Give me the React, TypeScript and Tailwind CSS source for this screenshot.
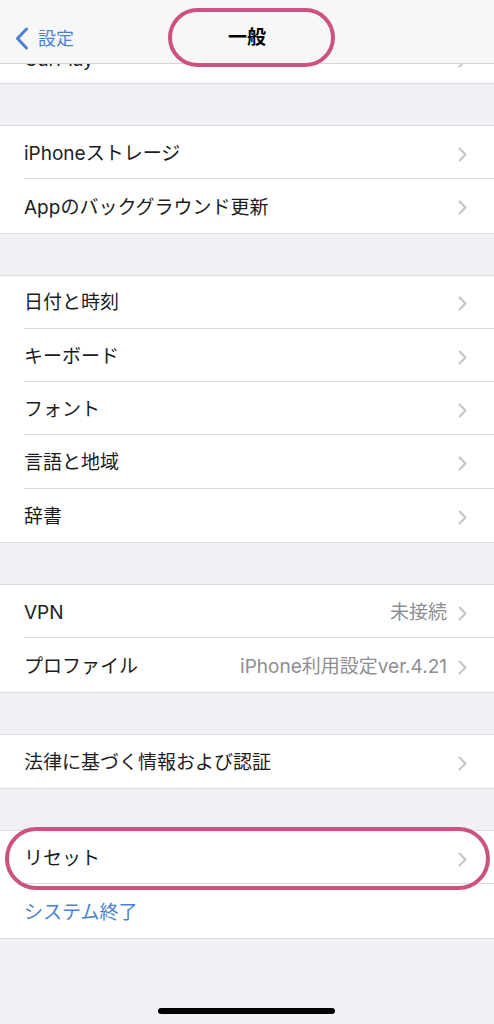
import React from "react";

type Row = { label: string; value?: string; blue?: boolean; chevron?: boolean };

const groups: Row[][] = [
  [{ label: "iPhoneストレージ" }, { label: "Appのバックグラウンド更新" }],
  [
    { label: "日付と時刻" },
    { label: "キーボード" },
    { label: "フォント" },
    { label: "言語と地域" },
    { label: "辞書" },
  ],
  [
    { label: "VPN", value: "未接続" },
    { label: "プロファイル", value: "iPhone利用設定ver.4.21" },
  ],
  [{ label: "法律に基づく情報および認証" }],
  [{ label: "リセット" }, { label: "システム終了", blue: true, chevron: false }],
];

const Chevron = () => (
  <svg width="9" height="15" viewBox="0 0 9 15" fill="none" className="shrink-0">
    <polyline
      points="1.5,1.5 7.5,7.5 1.5,13.5"
      stroke="#c4c4c8"
      strokeWidth="2"
      strokeLinecap="round"
      strokeLinejoin="round"
    />
  </svg>
);

const ListRow = ({ row, last }: { row: Row; last: boolean }) => (
  <div className="flex h-[53.3px] items-stretch bg-white pl-6">
    <div
      className={
        "flex flex-1 items-center pr-[27px] pt-[4px] " +
        (last ? "" : "border-b border-[#dcdce0]")
      }
    >
      <span
        className={
          "flex-1 text-[19px] " + (row.blue ? "text-[#4a82d0]" : "text-[#1c1c1e]")
        }
      >
        {row.label}
      </span>
      {row.value && (
        <span className="mr-[11px] text-[19px] text-[#8e8e93]">{row.value}</span>
      )}
      {row.chevron !== false && <Chevron />}
    </div>
  </div>
);

export default function App() {
  return (
    <div
      className="relative h-[1024px] w-[494px] overflow-hidden bg-[#f0f0f5]"
      style={{ fontFamily: 'Inter, "Noto Sans CJK JP", sans-serif' }}
    >
      <div className="flex h-[64px] items-center border-b border-[#d6d6da] bg-[#f7f7f7] pt-[13px]">
        <div className="flex w-[120px] items-center pl-[15px]">
          <svg width="14" height="23" viewBox="0 0 14 23" fill="none">
            <polyline
              points="11.5,2 2.5,11.5 11.5,21"
              stroke="#4a82d0"
              strokeWidth="3"
              strokeLinecap="round"
              strokeLinejoin="round"
            />
          </svg>
          <span className="ml-[9px] text-[18px] text-[#4a82d0]">設定</span>
        </div>
        <div className="flex-1 text-center text-[19px] font-bold text-black">一般</div>
        <div className="w-[120px]" />
      </div>

      <div className="flex h-[20px] flex-col justify-end overflow-hidden border-b border-[#dcdce0] bg-white">
        <div className="flex h-[46px] shrink-0 items-center pl-6 pr-[27px]">
          <span className="flex-1 text-[19px] text-[#1c1c1e]">CarPlay</span>
          <Chevron />
        </div>
      </div>

      <div className="flex flex-col gap-[41px] pt-[41px]">
        {groups.map((g, gi) => (
          <div key={gi} className="border-y border-[#dcdce0]">
            {g.map((r, ri) => (
              <ListRow key={ri} row={r} last={ri === g.length - 1} />
            ))}
          </div>
        ))}
      </div>

      <div className="absolute left-[168px] top-[8px] h-[59px] w-[167px] rounded-full border-[4px] border-[#cc5281]" />
      <div className="absolute left-[5px] top-[827px] h-[63px] w-[485px] rounded-full border-[4px] border-[#cc5281]" />

      <div className="absolute bottom-[10px] left-[158px] h-[6px] w-[177px] rounded-full bg-black" />
    </div>
  );
}
